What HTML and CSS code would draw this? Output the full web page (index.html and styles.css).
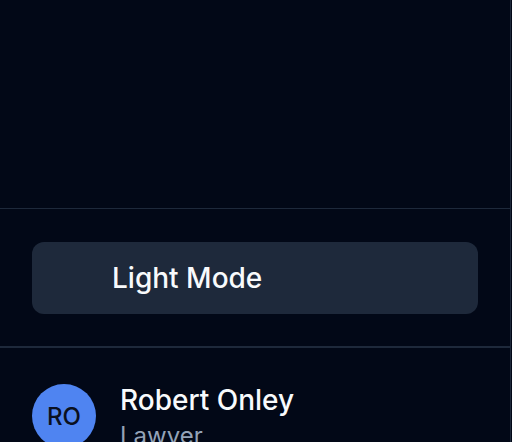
FILE: index.html
```html
<!DOCTYPE html>
<html lang="en">
<head>
<meta charset="utf-8">
<title>Sidebar</title>
<link rel="stylesheet" href="styles.css">
</head>
<body>
<aside class="sidebar">
  <div class="top"></div>
  <div class="section">
    <button class="mode-btn" type="button">
      <span class="icon-slot" aria-hidden="true"></span>
      <span class="mode-label">Light Mode</span>
    </button>
  </div>
  <div class="section user">
    <div class="avatar">RO</div>
    <div class="user-info">
      <div class="user-name">Robert Onley</div>
      <div class="user-role">Lawyer</div>
    </div>
  </div>
</aside>
</body>
</html>
```

FILE: styles.css
```css
html, body {
  margin: 0;
  padding: 0;
  background: #020817;
  height: 100%;
  overflow: hidden;
}

body {
  font-family: Inter, "Noto Sans", sans-serif;
  color: #f8fafc;
}

.sidebar {
  width: 510px;
  height: 100%;
  border-right: 1px solid #1e293b;
  display: flex;
  flex-direction: column;
}

.top {
  height: 208px;
  flex: none;
  border-bottom: 1px solid #1e293b;
}

.section {
  padding: 33px 32px 32px;
  border-bottom: 2px solid #1e293b;
  flex: none;
}

.mode-btn {
  width: 100%;
  display: flex;
  align-items: center;
  gap: 16px;
  height: 72px;
  padding: 16px 24px 16px 24px;
  box-sizing: border-box;
  border: none;
  border-radius: 12px;
  background: #1e293b;
  color: #f8fafc;
  font-family: inherit;
  font-size: 28px;
  line-height: 40px;
  font-weight: 500;
  text-align: left;
  cursor: pointer;
}

.icon-slot {
  width: 40px;
  height: 40px;
  flex: none;
}

.user {
  display: flex;
  align-items: center;
  gap: 24px;
  padding-top: 32px;
  border-bottom: none;
}

.avatar {
  width: 64px;
  height: 64px;
  border-radius: 50%;
  background: #4f84f1;
  color: #0a1020;
  display: flex;
  align-items: center;
  justify-content: center;
  font-size: 24px;
  font-weight: 500;
  flex: none;
}

.user-info {
  display: flex;
  flex-direction: column;
}

.user-name {
  font-size: 28px;
  line-height: 40px;
  font-weight: 500;
}

.user-role {
  font-size: 24px;
  line-height: 32px;
  color: #94a3b8;
}
```
